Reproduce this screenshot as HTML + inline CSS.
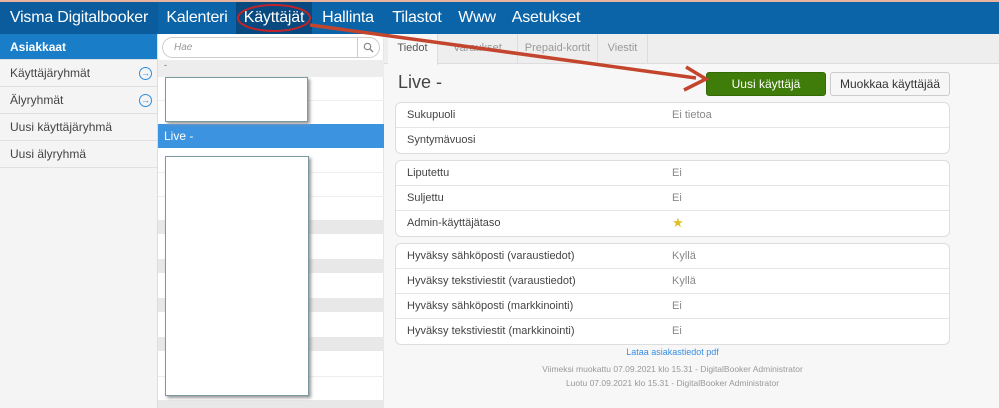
<!DOCTYPE html>
<html><head><meta charset="utf-8"><style>
*{box-sizing:border-box;margin:0;padding:0}
body{width:999px;height:408px;overflow:hidden;background:#f7f7f7;font-family:"Liberation Sans",sans-serif;position:relative;color:#333}
.a{position:absolute}
.top{left:0;top:0;width:999px;height:34px;background:#0b64a8;border-top:2px solid #e8b4a0}
.nav{top:2px;height:32px;color:#fff;font-size:16px;line-height:32px;text-align:center;letter-spacing:-0.2px}
.side{left:0;top:34px;width:158px;height:374px;background:#f4f4f4;border-right:1px solid #ddd}
.side div{height:27px;line-height:27px;padding-left:10px;font-size:12px;color:#444;border-bottom:1px solid #e0e0e0;position:relative}
.side .act{background:#1a7dc8;color:#fff;font-weight:bold;height:26px}
.circ{position:absolute;right:5px;top:7px;width:13px;height:13px;border:1.5px solid #2a8ee0;border-radius:50%;font-size:9px;line-height:10px;text-align:center;color:#2a8ee0}
.mid{left:158px;top:34px;width:226px;height:374px;background:#fff;border-right:1px solid #e5e5e5}
.gh{left:158px;width:226px;background:#e8e8e8;height:14px}
.rl{left:158px;width:226px;height:1px;background:#eee}
.box{background:#fff;border:1px solid #7a9aa0;box-shadow:2px 2px 3px #999}
.card{left:395px;width:555px;background:#fff;border:1px solid #ddd;border-radius:6px;overflow:hidden}
.card div{height:25px;line-height:24px;font-size:11px;color:#444;padding-left:11px;border-bottom:1px solid #e5e5e5;position:relative}
.card div:last-child{border-bottom:none}
.card span{position:absolute;left:276px;color:#888}
.tab{top:34px;height:30px;line-height:28px;font-size:11px;color:#999;text-align:center;border-right:1px solid #ddd}
</style></head><body>
<div class="a top"></div>
<div class="a nav" style="left:0;width:158px;background:#0a5c9c">Visma Digitalbooker</div>
<div class="a nav" style="left:158px;width:78px">Kalenteri</div>
<div class="a nav" style="left:236px;width:76px;background:#08497f">Käyttäjät</div>
<div class="a nav" style="left:312px;width:72px">Hallinta</div>
<div class="a nav" style="left:384px;width:66px">Tilastot</div>
<div class="a nav" style="left:450px;width:54px">Www</div>
<div class="a nav" style="left:504px;width:84px">Asetukset</div>
<div class="a side">
<div class="act">Asiakkaat</div>
<div>Käyttäjäryhmät<span class="circ">→</span></div>
<div>Älyryhmät<span class="circ">→</span></div>
<div>Uusi käyttäjäryhmä</div>
<div>Uusi älyryhmä</div>
</div>
<div class="a mid"></div>
<div class="a" style="left:162px;top:37px;width:218px;height:21px;background:#fff;border:1px solid #ccc;border-radius:11px;font-size:10px;font-style:italic;color:#999;line-height:19px;padding-left:11px">Hae</div>
<div class="a" style="left:357px;top:38px;width:1px;height:19px;background:#ccc"></div>
<svg class="a" style="left:363px;top:42px" width="11" height="11"><circle cx="4.5" cy="4.5" r="3.2" fill="none" stroke="#888" stroke-width="1.2"/><line x1="7" y1="7" x2="10" y2="10" stroke="#888" stroke-width="1.3"/></svg>
<div class="a" style="left:158px;top:60px;width:226px;height:17px;background:#ededed;font-size:9px;padding-left:6px;color:#666">-</div>
<div class="a gh" style="top:220px"></div><div class="a gh" style="top:259px"></div>
<div class="a gh" style="top:298px"></div><div class="a gh" style="top:337px"></div>
<div class="a gh" style="top:400px;height:8px"></div>
<div class="a rl" style="top:100px"></div><div class="a rl" style="top:172px"></div><div class="a rl" style="top:196px"></div><div class="a rl" style="top:376px"></div>
<div class="a" style="left:158px;top:124px;width:226px;height:24px;background:#3c93e0;color:#fff;font-size:12px;line-height:24px;padding-left:6px">Live -</div>
<div class="a box" style="left:165px;top:77px;width:143px;height:45px"></div>
<div class="a box" style="left:165px;top:156px;width:144px;height:240px"></div>
<div class="a" style="left:384px;top:34px;width:615px;height:30px;background:#eee;border-bottom:1px solid #ddd"></div>
<div class="a tab" style="left:388px;width:50px;background:#f7f7f7;color:#555;height:31px">Tiedot</div>
<div class="a tab" style="left:438px;width:80px">Varaukset</div>
<div class="a tab" style="left:518px;width:80px">Prepaid-kortit</div>
<div class="a tab" style="left:598px;width:50px">Viestit</div>
<div class="a" style="left:398px;top:72px;font-size:18px;color:#444">Live -</div>
<div class="a" style="left:706px;top:72px;width:120px;height:24px;background:#3f7c0a;border:1px solid #356a06;border-radius:3px;color:#fff;font-size:12px;line-height:22px;text-align:center">Uusi käyttäjä</div>
<div class="a" style="left:830px;top:72px;width:120px;height:24px;background:#f6f6f6;border:1px solid #ccc;border-radius:3px;color:#333;font-size:12px;line-height:22px;text-align:center">Muokkaa käyttäjää</div>
<div class="a card" style="top:102px"><div>Sukupuoli<span>Ei tietoa</span></div><div>Syntymävuosi</div></div>
<div class="a card" style="top:160px"><div>Liputettu<span>Ei</span></div><div>Suljettu<span>Ei</span></div><div>Admin-käyttäjätaso<span style="color:#e0c020;font-size:13px">★</span></div></div>
<div class="a card" style="top:243px"><div>Hyväksy sähköposti (varaustiedot)<span>Kyllä</span></div><div>Hyväksy tekstiviestit (varaustiedot)<span>Kyllä</span></div><div>Hyväksy sähköposti (markkinointi)<span>Ei</span></div><div>Hyväksy tekstiviestit (markkinointi)<span>Ei</span></div></div>
<div class="a" style="left:395px;top:347px;width:555px;text-align:center;font-size:9px;color:#3a8ee0">Lataa asiakastiedot pdf</div>
<div class="a" style="left:395px;top:362px;width:555px;text-align:center;font-size:8.5px;color:#999;line-height:14px">Viimeksi muokattu 07.09.2021 klo 15.31 - DigitalBooker Administrator<br>Luotu 07.09.2021 klo 15.31 - DigitalBooker Administrator</div>
<svg class="a" style="left:0;top:0" width="999" height="408">
<ellipse cx="274" cy="18" rx="36" ry="13" fill="none" stroke="#c0242a" stroke-width="2"/>
<line x1="310" y1="25" x2="696" y2="78" stroke="#c4452e" stroke-width="3.5"/>
<path d="M686 67 L706 79 L684 90" fill="none" stroke="#c4452e" stroke-width="3.5" stroke-linejoin="miter"/>
</svg>
</body></html>
